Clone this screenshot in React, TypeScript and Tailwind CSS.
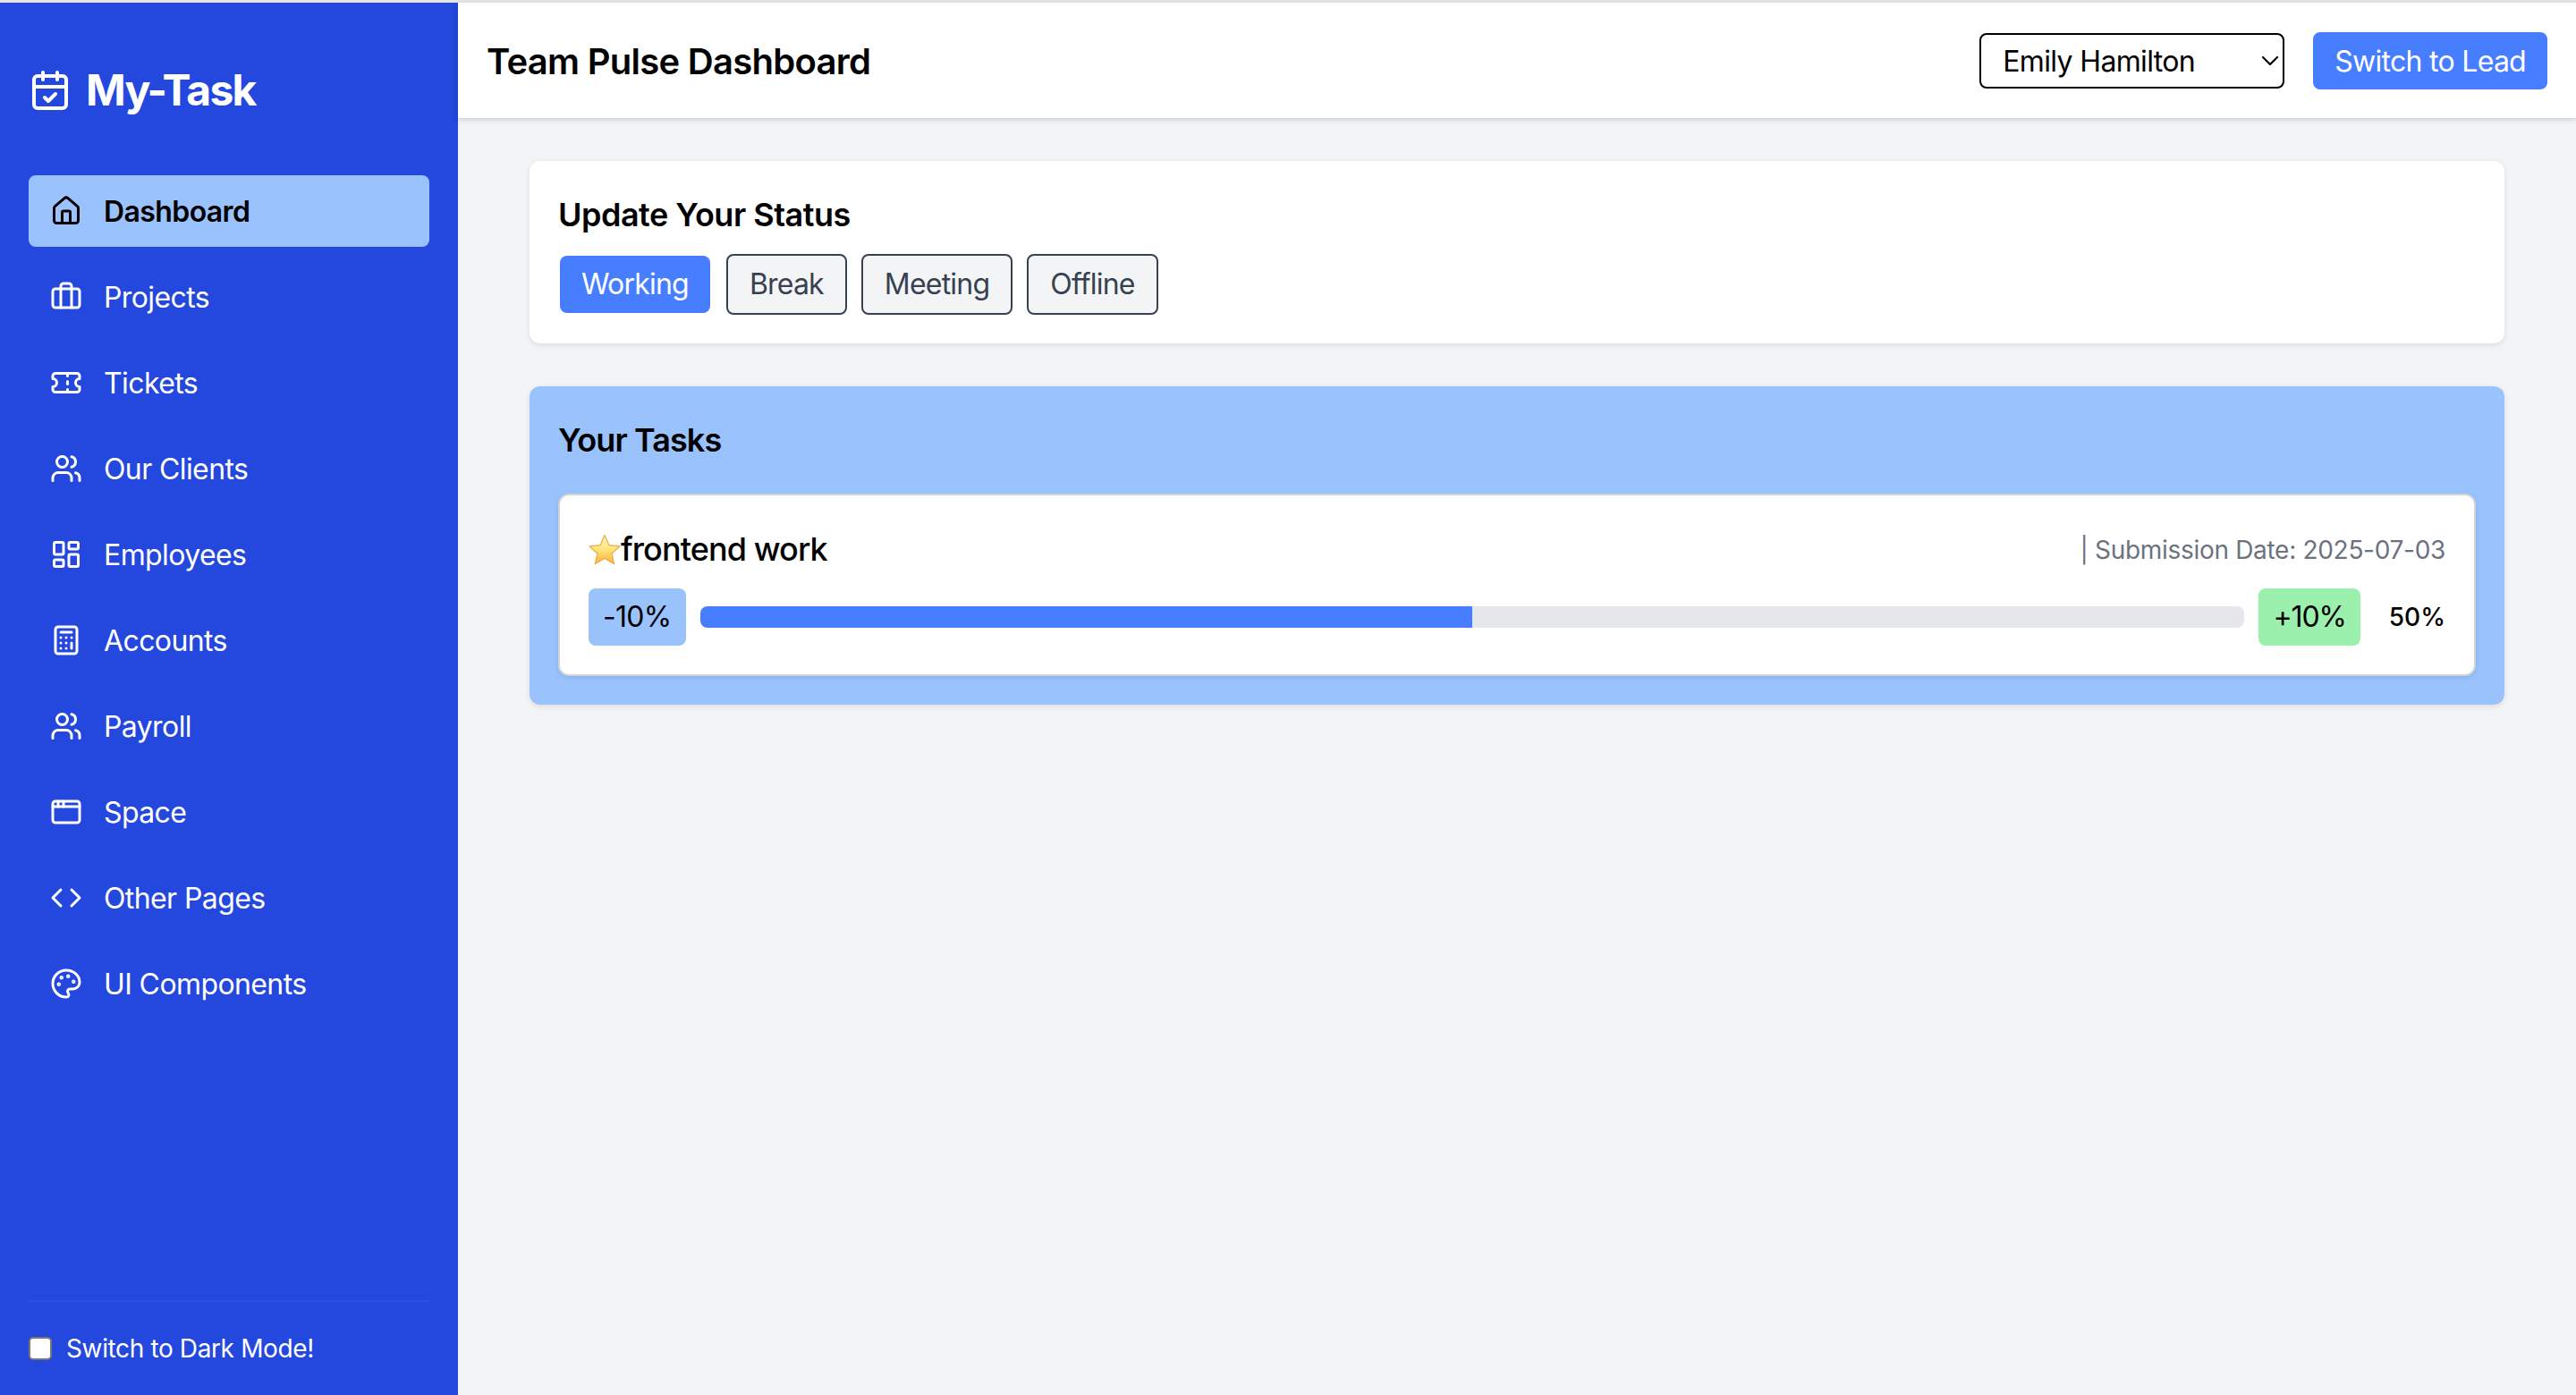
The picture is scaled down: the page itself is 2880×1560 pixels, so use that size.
import {
  AppWindow,
  Briefcase,
  Calculator,
  CalendarCheck,
  ChevronDown,
  Code,
  House,
  LayoutDashboard,
  Palette,
  Ticket,
  Users,
} from "lucide-react";

const navItems = [
  { label: "Dashboard", icon: House, active: true },
  { label: "Projects", icon: Briefcase },
  { label: "Tickets", icon: Ticket },
  { label: "Our Clients", icon: Users },
  { label: "Employees", icon: LayoutDashboard },
  { label: "Accounts", icon: Calculator },
  { label: "Payroll", icon: Users },
  { label: "Space", icon: AppWindow },
  { label: "Other Pages", icon: Code },
  { label: "UI Components", icon: Palette },
];

function StarEmoji() {
  return (
    <svg width="36" height="34" viewBox="0 0 36 34" className="shrink-0">
      <defs>
        <linearGradient id="star" x1="0" y1="0" x2="0" y2="1">
          <stop offset="0" stopColor="#fff8d2" />
          <stop offset="0.5" stopColor="#ffe47c" />
          <stop offset="1" stopColor="#f7b23b" />
        </linearGradient>
      </defs>
      <path
        d="M18 1.5l5 11.2 12 1.2-9 8.1 2.6 11.500L18 27.6 7.400 33.500 10 22 1 13.900l12-1.200z"
        fill="url(#star)"
        stroke="#eeab3e"
        strokeWidth="1.2"
        strokeLinejoin="round"
      />
    </svg>
  );
}

function Sidebar() {
  return (
    <aside className="w-[512px] shrink-0 bg-[#2447dd] px-8 flex flex-col text-white">
      <div className="mt-[66px] mb-[63px] h-16 flex items-center gap-4">
        <CalendarCheck size={48} />
        <span className="text-[48px] leading-[64px] font-bold tracking-[-1.8px]">
          My-Task
        </span>
      </div>
      <nav className="flex flex-col gap-4">
        {navItems.map((item) => (
          <a
            key={item.label}
            className={`h-20 px-6 flex items-center gap-6 rounded-lg text-[32px] leading-[48px] tracking-[-0.6px] ${
              item.active ? "bg-[#9ac3fe] text-black font-semibold" : ""
            }`}
          >
            <item.icon size={36} />
            <span className="pt-[2px]">{item.label}</span>
          </a>
        ))}
      </nav>
      <div className="mt-auto border-t-2 border-[#2a50e8] py-8">
        <label className="flex items-center gap-4 h-10 text-[28px] leading-10 tracking-[-0.37px]">
          <input
            type="checkbox"
            className="appearance-none w-[26px] h-[26px] bg-white border-2 border-[#767676] rounded-[5px]"
          />
          <span>Switch to Dark Mode!</span>
        </label>
      </div>
    </aside>
  );
}

function Header() {
  return (
    <header className="relative h-[129px] shrink-0 bg-white px-8 flex items-center justify-between shadow-[0_2px_6px_rgba(0,0,0,0.16)]">
      <h1 className="pt-[2px] text-[40px] leading-[56px] font-semibold text-black tracking-[-0.73px]">
        Team Pulse Dashboard
      </h1>
      <div className="flex items-center gap-8">
        <div className="relative">
          <select
            defaultValue="Emily Hamilton"
            className="appearance-none block w-[341px] h-[62px] pl-6 pr-10 pt-[2px] bg-white border-2 border-black rounded-lg text-[32px] tracking-[-0.65px] text-black"
          >
            <option>Emily Hamilton</option>
          </select>
          <ChevronDown
            size={32}
            strokeWidth={1.6}
            className="absolute right-0 top-[15px] text-black pointer-events-none"
          />
        </div>
        <button className="h-16 px-6 pt-[2px] rounded-lg bg-[#477dff] text-white text-[32px] tracking-[-0.72px]">
          Switch to Lead
        </button>
      </div>
    </header>
  );
}

function StatusCard() {
  return (
    <section className="bg-white rounded-xl p-8 shadow-[0_2px_6px_rgba(0,0,0,0.1)]">
      <h2 className="text-[36px] leading-[56px] font-semibold text-black mb-4 tracking-[-0.5px]">
        Update Your Status
      </h2>
      <div className="flex items-center gap-4">
        <button className="h-[68px] px-6 rounded-[10px] border-2 border-transparent bg-clip-padding bg-[#477dff] text-white text-[32px] tracking-[-0.8px]">
          Working
        </button>
        {["Break", "Meeting", "Offline"].map((s) => (
          <button
            key={s}
            className="h-[68px] px-6 rounded-lg bg-[#f3f4f6] border-2 border-[#374151] text-[#374151] text-[32px] tracking-[-0.8px]"
          >
            {s}
          </button>
        ))}
      </div>
    </section>
  );
}

function TasksCard() {
  return (
    <section className="bg-[#9ac3fe] rounded-xl p-8 shadow-[0_2px_6px_rgba(0,0,0,0.1)]">
      <h2 className="text-[36px] leading-[56px] font-semibold text-black mb-8 tracking-[-0.9px]">
        Your Tasks
      </h2>
      <div className="bg-white rounded-xl border-2 border-[#d1d5db] p-8 shadow-[0_2px_6px_rgba(0,0,0,0.1)]">
        <div className="flex items-center justify-between h-14 mb-4">
          <div className="flex items-center text-[36px] leading-[56px] font-medium text-black tracking-[-0.9px]">
            <StarEmoji />
            <span>frontend work</span>
          </div>
          <span className="pt-[2px] text-[28px] text-[#6b7280] tracking-[-0.3px]">
            | Submission Date: 2025-07-03
          </span>
        </div>
        <div className="flex items-center gap-4">
          <button className="h-16 px-4 rounded-lg bg-[#9ac3fe] text-black text-[32px] tracking-[-0.7px]">
            -10%
          </button>
          <div className="flex-1 h-6 rounded-lg bg-[#e5e7eb] overflow-hidden">
            <div className="w-1/2 h-full bg-[#477dff]" />
          </div>
          <button className="h-16 px-4 rounded-lg bg-[#9af0ac] text-black text-[32px] tracking-[-1.1px]">
            +10%
          </button>
          <span className="ml-4 text-[28px] font-medium text-black">50%</span>
        </div>
      </div>
    </section>
  );
}

export default function App() {
  return (
    <div className="h-[1560px] flex flex-col bg-[#f3f4f6] font-['Inter',sans-serif] border-t-[3px] border-[#e5e5e5]">
      <div className="flex flex-1 min-h-0">
        <Sidebar />
        <div className="flex-1 flex flex-col">
          <Header />
          <main className="px-20 py-12 flex flex-col gap-12">
            <StatusCard />
            <TasksCard />
          </main>
        </div>
      </div>
    </div>
  );
}
